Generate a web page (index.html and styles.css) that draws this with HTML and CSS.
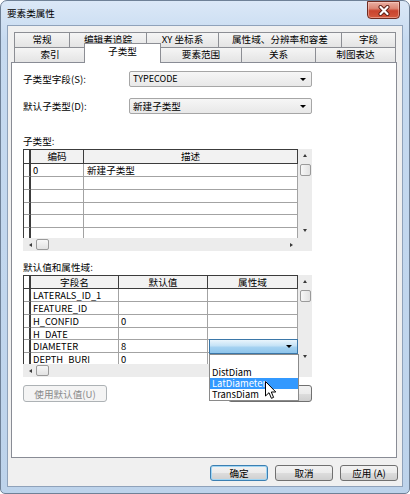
FILE: index.html
```html
<!DOCTYPE html>
<html lang="zh">
<head>
<meta charset="utf-8">
<title>要素类属性</title>
<link rel="stylesheet" href="styles.css">
</head>
<body>
<div class="window">
  <div class="titlebar">
    <span class="title">要素类属性</span>
    <div class="close">
      <svg width="14" height="11" viewBox="0 0 14 11"><path d="M3.5 2 L10.5 9 M10.5 2 L3.5 9" stroke="#5b1c14" stroke-width="4" stroke-linecap="round"/><path d="M3.5 2 L10.5 9 M10.5 2 L3.5 9" stroke="#ffffff" stroke-width="2.2" stroke-linecap="round"/></svg>
    </div>
  </div>
  <div class="client">
    <div class="tabs">
      <div class="tabrow row1">
        <div class="tab w55">常规</div>
        <div class="tab w77">编辑者追踪</div>
        <div class="tab w72">XY 坐标系</div>
        <div class="tab w123">属性域、分辨率和容差</div>
        <div class="tab w55 last">字段</div>
      </div>
      <div class="tabrow row2">
        <div class="tab w71">索引</div>
        <div class="tab sel">子类型</div>
        <div class="tab w81">要素范围</div>
        <div class="tab w74">关系</div>
        <div class="tab w81 last">制图表达</div>
      </div>
    </div>
    <div class="panel">
      <div class="field first">
        <span class="flabel">子类型字段(S):</span>
        <div class="combo"><span class="latin">TYPECODE</span><i class="arrow"></i></div>
      </div>
      <div class="field second">
        <span class="flabel">默认子类型(D):</span>
        <div class="combo"><span>新建子类型</span><i class="arrow"></i></div>
      </div>

      <div class="section first-sec">子类型:</div>
      <div class="gridbox">
        <div class="gbody g1">
          <div class="h hc"></div><div class="h">编码</div><div class="h">描述</div>
          <div class="rh"></div><div class="c">0</div><div class="c cj">新建子类型</div>
          <div class="rh"></div><div class="c"></div><div class="c"></div>
          <div class="rh"></div><div class="c"></div><div class="c"></div>
          <div class="rh"></div><div class="c"></div><div class="c"></div>
          <div class="rh"></div><div class="c"></div><div class="c"></div>
          <div class="rh"></div><div class="c"></div><div class="c"></div>
        </div>
        <div class="vscroll">
          <div class="vup"><i class="tri-up"></i></div>
          <div class="vthumb"></div>
          <div class="vdown"><i class="tri-down"></i></div>
        </div>
        <div class="hscroll">
          <div class="hleft"><i class="tri-left"></i></div>
          <div class="hthumb"></div>
          <div class="hright"><i class="tri-right"></i></div>
        </div>
        <div class="corner"></div>
      </div>

      <div class="section second-sec">默认值和属性域:</div>
      <div class="gridbox">
        <div class="gbody g2">
          <div class="h hc"></div><div class="h">字段名</div><div class="h">默认值</div><div class="h">属性域</div>
          <div class="rh"></div><div class="c">LATERALS_ID_1</div><div class="c"></div><div class="c"></div>
          <div class="rh"></div><div class="c">FEATURE_ID</div><div class="c"></div><div class="c"></div>
          <div class="rh"></div><div class="c">H_CONFID</div><div class="c">0</div><div class="c"></div>
          <div class="rh"></div><div class="c">H_DATE</div><div class="c"></div><div class="c"></div>
          <div class="rh"></div><div class="c">DIAMETER</div><div class="c">8</div><div class="c cellcombo"><div class="bluecombo"><i class="arrow"></i></div></div>
          <div class="rh"></div><div class="c">DEPTH_BURI</div><div class="c">0</div><div class="c"></div>
        </div>
        <div class="vscroll">
          <div class="vup"><i class="tri-up"></i></div>
          <div class="vthumb"></div>
          <div class="vdown"><i class="tri-down"></i></div>
        </div>
        <div class="hscroll">
          <div class="hleft"><i class="tri-left"></i></div>
          <div class="hthumb"></div>
          <div class="hright"><i class="tri-right"></i></div>
        </div>
        <div class="corner"></div>
      </div>

      <div class="btnrow">
        <button class="btn disabled" disabled>使用默认值(U)</button>
        <button class="btn plain"></button>
      </div>

      <ul class="droplist">
        <li class="blank"></li>
        <li>DistDiam</li>
        <li class="hl">LatDiameter</li>
        <li>TransDiam</li>
      </ul>

      <svg class="cursor" width="12" height="19" viewBox="0 0 12 19">
        <path d="M0.5 0.5 L0.5 15 L4 11.7 L6.4 17.3 L8.6 16.4 L6.3 11 L10.8 11 Z" fill="#ffffff" stroke="#000000" stroke-width="1" stroke-linejoin="round"/>
      </svg>
    </div>

    <div class="dlgbtns">
      <button class="btn dlg default">确定</button>
      <button class="btn dlg">取消</button>
      <button class="btn dlg">应用 (A)</button>
    </div>
  </div>
</div>
</body>
</html>
```

FILE: styles.css
```css
* { box-sizing: border-box; margin: 0; padding: 0; }

body {
  margin: 0;
  background: #ffffff;
  font-family: "Noto Sans CJK SC", "Noto Sans", sans-serif;
  font-size: 9.6px;
  color: #000;
}

.window {
  width: 410px;
  height: 494px;
  border: 1px solid #6f8197;
  border-radius: 7px 7px 5px 5px;
  background: linear-gradient(#dbe8f7, #c6daf0 40px, #bdd3eb);
  display: flex;
  flex-direction: column;
  overflow: hidden;
}

.titlebar {
  height: 24px;
  display: flex;
  align-items: flex-start;
  padding-left: 6px;
}

.title {
  line-height: 14px;
  margin-top: 5px;
  font-size: 9.6px;
}

.close {
  margin-left: auto;
  margin-right: 9px;
  width: 33px;
  height: 18px;
  border: 1px solid #6e2c22;
  border-radius: 0 0 4px 4px;
  background: linear-gradient(#eab0a3, #dc8674 40%, #c9432e 55%, #d4583d);
  display: flex;
  align-items: center;
  justify-content: center;
  box-shadow: inset 0 0 0 1px rgba(255, 220, 210, 0.45);
}

.client {
  margin: 0 6px;
  height: 462px;
  border: 1px solid #8fa2ba;
  background: #f0f0f0;
  display: flex;
  flex-direction: column;
}

/* tabs */
.tabs {
  margin: 6px 0 0 6px;
  width: 382px;
  position: relative;
  z-index: 2;
}

.tabrow {
  display: flex;
  height: 15px;
}

.tab {
  height: 15px;
  border-top: 1px solid #8c8e94;
  border-left: 1px solid #8c8e94;
  background: linear-gradient(#f5f5f5, #e4e4e4);
  text-align: center;
  line-height: 13px;
  white-space: nowrap;
  overflow: hidden;
}

.tab.last { border-right: 1px solid #8c8e94; }

.row2 { align-items: flex-end; }

.tab.sel {
  width: 77px;
  height: 20px;
  margin: -4px -1px -1px -1px;
  background: #ffffff;
  border: 1px solid #8c8e94;
  border-bottom: none;
  line-height: 14px;
  position: relative;
  z-index: 3;
}

.w55 { width: 55px; }
.w77 { width: 77px; }
.w72 { width: 72px; }
.w123 { width: 123px; }
.w71 { width: 71px; }
.w81 { width: 81px; }
.w74 { width: 74px; }

/* panel */
.panel {
  margin-left: 3px;
  width: 386px;
  height: 396px;
  background: #ffffff;
  border: 1px solid #898c95;
  padding-left: 11px;
  position: relative;
  z-index: 1;
}

.field {
  display: flex;
  align-items: center;
  height: 16px;
}
.field.first { margin-top: 8px; }
.field.second { margin-top: 11px; }

.flabel { width: 106px; line-height: 14px; }

.combo {
  width: 183px;
  height: 16px;
  border: 1px solid #a6a6a6;
  border-radius: 2px;
  background: linear-gradient(#f6f6f6, #e8e8e8);
  display: flex;
  align-items: center;
  padding: 0 5px 0 3px;
  line-height: 14px;
}

.latin { font-size: 9px; }

.arrow {
  display: block;
  margin-left: auto;
  width: 0;
  height: 0;
  border-left: 3px solid transparent;
  border-right: 3px solid transparent;
  border-top: 3px solid #000;
}

.section {
  height: 14px;
  line-height: 14px;
}
.first-sec { margin-top: 20px; }
.second-sec { margin-top: 9px; }

.gridbox {
  margin-top: 1px;
  width: 289px;
  display: grid;
  grid-template-columns: 275px 14px;
  grid-template-rows: 89px 13px;
}

.gbody {
  display: grid;
  overflow: hidden;
  border-left: 1px solid #3c3c3c;
  background: #ffffff;
  font-size: 9.4px;
}

.g1 {
  grid-template-columns: 7px 53px 214px;
  grid-template-rows: 15px 13px 13px 13px 12px 13px 13px;
}
.g2 {
  grid-template-columns: 7px 88px 89px 90px;
  grid-template-rows: 14px 13px 13px 13px 12px 13px 13px;
}

.h {
  background: #f2f2f2;
  border-top: 1px solid #3c3c3c;
  border-right: 1px solid #3c3c3c;
  border-bottom: 1px solid #3c3c3c;
  text-align: center;
  line-height: 12px;
  font-size: 9.6px;
}
.h.hc { background: #ffffff; border-right-width: 2px; }

.rh {
  border-right: 2px solid #3c3c3c;
  border-bottom: 1px solid #9a9a9a;
}

.c {
  border-right: 1px solid #a3a3a3;
  border-bottom: 1px solid #a3a3a3;
  padding-left: 2px;
  line-height: 12px;
  white-space: nowrap;
  overflow: hidden;
}
.c.cj { padding-left: 3px; font-size: 9.6px; }

.cellcombo { overflow: visible; padding: 0; position: relative; z-index: 1; }

.bluecombo {
  margin: -1px 0 0 1px;
  width: 89px;
  height: 15px;
  border: 1px solid #3b77a8;
  background: linear-gradient(#eaf5fc, #c4e2f6 45%, #a5d2f1 55%, #8ec5ec);
  display: flex;
  align-items: center;
  padding-right: 5px;
}

.vscroll {
  background: #ececec;
  display: flex;
  flex-direction: column;
  align-items: center;
}
.vup { height: 15px; width: 100%; display: flex; justify-content: center; padding-top: 5px; }
.vthumb {
  width: 11px;
  height: 12px;
  margin-left: 1px;
  border: 1px solid #9a9a9a;
  border-radius: 2px;
  background: linear-gradient(90deg, #f7f7f7, #e2e2e2);
}
.vdown { margin-top: auto; height: 13px; width: 100%; display: flex; justify-content: center; padding-top: 4px; }

.hscroll {
  background: #ececec;
  display: flex;
  align-items: center;
}
.hleft { width: 13px; height: 100%; display: flex; align-items: center; justify-content: flex-end; padding-right: 4px; }
.hthumb {
  width: 13px;
  height: 11px;
  border: 1px solid #9a9a9a;
  border-radius: 2px;
  background: linear-gradient(#f7f7f7, #e2e2e2);
}
.hright { margin-left: auto; width: 12px; height: 100%; display: flex; align-items: center; padding-left: 4px; }

.corner { background: #ececec; }

.tri-up, .tri-down, .tri-left, .tri-right { display: block; width: 0; height: 0; }
.tri-up { border-left: 2.5px solid transparent; border-right: 2.5px solid transparent; border-bottom: 3px solid #3a3a3a; }
.tri-down { border-left: 2.5px solid transparent; border-right: 2.5px solid transparent; border-top: 3px solid #3a3a3a; }
.tri-left { border-top: 2.5px solid transparent; border-bottom: 2.5px solid transparent; border-right: 3px solid #3a3a3a; }
.tri-right { border-top: 2.5px solid transparent; border-bottom: 2.5px solid transparent; border-left: 3px solid #3a3a3a; }

/* buttons */
.btnrow {
  margin-top: 8px;
  width: 289px;
  display: flex;
  justify-content: space-between;
}

.btn {
  font-family: inherit;
  font-size: 9.6px;
  color: #000;
  height: 17px;
  border: 1px solid #707070;
  border-radius: 3px;
  background: linear-gradient(#f2f2f2, #ebebeb 50%, #dddddd 50%, #cfcfcf);
  line-height: 14px;
  text-align: center;
}

.btnrow .btn { width: 84px; }

.btn.disabled {
  border-color: #adb2b5;
  background: #f4f4f4;
  color: #8a8a8a;
}

.droplist {
  list-style: none;
  position: absolute;
  left: 197px;
  top: 291px;
  width: 90px;
  height: 47px;
  background: #ffffff;
  border: 1px solid #8a8a8a;
  font-size: 9.4px;
  z-index: 5;
}
.droplist li {
  height: 11px;
  line-height: 11px;
  padding-left: 2px;
}
.droplist li.blank { height: 12px; }
.droplist li.hl { background: #3399ff; color: #ffffff; }

.cursor {
  position: absolute;
  left: 253px;
  top: 318px;
  z-index: 6;
}

.dlgbtns {
  margin-top: 7px;
  display: flex;
  justify-content: flex-end;
  gap: 7px;
  padding-right: 4px;
}

.btn.dlg { width: 58px; height: 16px; }
.btn.dlg.default {
  border-color: #3c7fb1;
  box-shadow: inset 0 0 0 1px #9fd5f4;
}
```
